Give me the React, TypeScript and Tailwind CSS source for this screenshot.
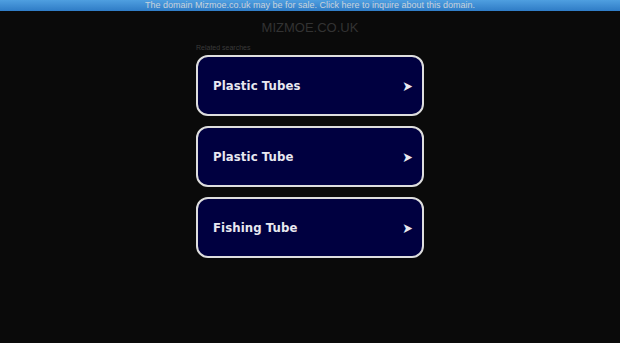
import React from "react";

const searches = ["Plastic Tubes", "Plastic Tube", "Fishing Tube"];

const App = () => {
  return (
    <div className="min-h-[343px] bg-[#0a0a0a]">
      <div className="h-[11px] bg-gradient-to-b from-[#4f9fe0] to-[#2f7cc6] text-center text-[9px] leading-[11px] text-[#c9d3dc] font-['Liberation_Sans',sans-serif] overflow-hidden">
        The domain Mizmoe.co.uk may be for sale. Click here to inquire about this domain.
      </div>
      <div className="pt-[9px] text-center text-[13px] leading-[16px] text-[#333333] font-['Liberation_Sans',sans-serif]">
        MIZMOE.CO.UK
      </div>
      <div className="mx-auto w-[228px] pt-[8px]">
        <div className="text-[7px] leading-[8px] text-[#3a3a3a] font-['Liberation_Sans',sans-serif]">
          Related searches
        </div>
        <div className="mt-[3px] flex flex-col gap-[10px]">
          {searches.map((s) => (
            <div
              key={s}
              className="flex h-[61px] items-center justify-between rounded-[12px] border-2 border-[#dedede] bg-[#000040] pl-[15px] pr-[9px] font-['DejaVu_Sans_Condensed','DejaVu_Sans',sans-serif] text-[13px] font-bold tracking-[0.1px] text-[#e8e8f0]"
            >
              <span>{s}</span>
              <span className="text-[14px] leading-none">➤</span>
            </div>
          ))}
        </div>
      </div>
    </div>
  );
};

export default App;
